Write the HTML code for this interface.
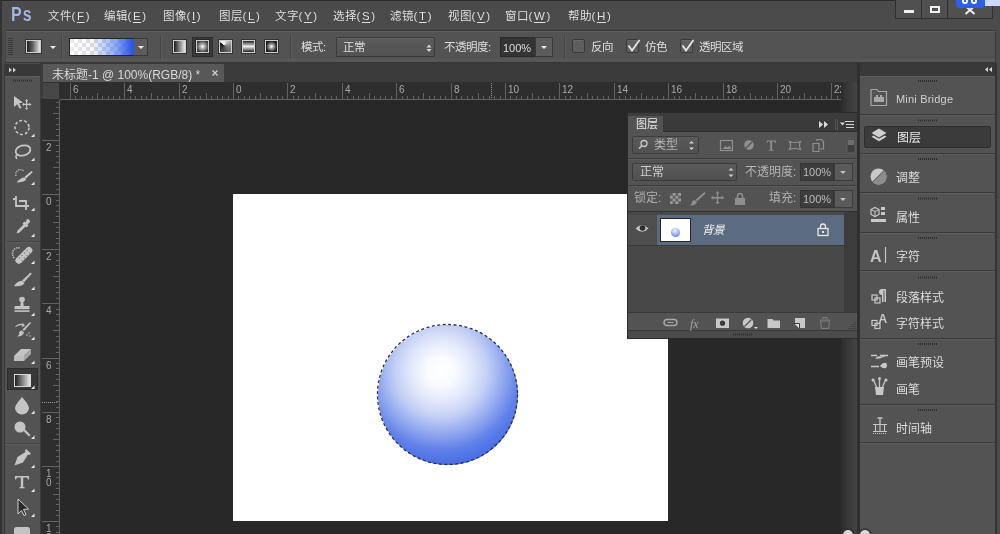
<!DOCTYPE html>
<html lang="zh-CN">
<head>
<meta charset="utf-8">
<style>
*{margin:0;padding:0;box-sizing:border-box}
html,body{width:1000px;height:534px;overflow:hidden;background:#4a4a4a}
body{position:relative;will-change:transform;font-family:"Liberation Sans",sans-serif;color:#d8d8d8;font-size:12px}
.a{position:absolute}
.t{position:absolute;white-space:nowrap;line-height:1}
svg{position:absolute;overflow:visible}
#topline{left:0;top:0;width:1000px;height:1px;background:#2b2b2b}
#leftline{left:0;top:0;width:2px;height:534px;background:#333}
#menu{left:0;top:1px;width:1000px;height:30px;background:#4b4b4b}
.mi{position:absolute;top:10px;font-size:11.5px;line-height:12px;color:#dedede;letter-spacing:0.7px}
.mi u{text-decoration:underline;text-underline-offset:2px;text-decoration-thickness:1px;padding:0 1px}
#logo{left:11px;top:4px;font-size:20px;font-weight:bold;color:#a4b6da;transform:scaleX(0.8);transform-origin:0 0;letter-spacing:1.5px;text-shadow:0 0 1px #2a4070}
.wb{position:absolute;top:0;height:19px;background:#505050;border:1px solid #2f2f2f;border-top:none}
#opts{left:5px;top:31px;width:991px;height:32px;background:#535353;border-top:1px solid #5e5e5e;border-right:1px solid #3a3a3a;border-left:1px solid #444;border-bottom:1px solid #363636;box-shadow:0 -1px 0 #3c3c3c,inset 0 -4px 0 #575757,inset 0 -5px 0 #4f4f4f}
.sep{position:absolute;top:35px;width:2px;height:24px;border-left:1px solid #444;border-right:1px solid #5c5c5c}
.gi{position:absolute;top:40px;width:13px;height:13px;border:1px solid #cfcfcf;box-shadow:0 0 0 1px rgba(20,20,20,0.5)}
.lbl{position:absolute;top:41px;font-size:11.5px;line-height:12px;color:#dedede}
.dd{position:absolute;top:37px;height:20px;background:linear-gradient(#5b5b5b,#525252);border:1px solid #3a3a3a;border-radius:2px;box-shadow:inset 0 1px 0 #646464}
.cb{position:absolute;top:39px;width:13px;height:14px;background:#5e5e5e;border:1px solid #3a3a3a;border-radius:2px;box-shadow:inset 0 1px 0 #6a6a6a}
.tri{position:absolute;width:0;height:0;border-left:3px solid transparent;border-right:3px solid transparent;border-top:3px solid #eee}
#tbhead{left:5px;top:64px;width:35px;height:12px;background:#383838}
#tb{left:5px;top:76px;width:35px;height:458px;background:#535353;border-top:1px solid #5c5c5c}
#docarea{left:40px;top:63px;width:817px;height:471px;background:#3b3b3b}
#tab{left:43px;top:64px;width:181px;height:18px;background:#585858}
#hruler{left:43px;top:82px;width:799px;height:17px;background:#2e2e2e}
#vruler{left:41px;top:99px;width:19px;height:435px;background:#2e2e2e}
#rcorner{left:43px;top:83px;width:16px;height:16px;background:#474747}
#canvas{left:60px;top:100px;width:782px;height:434px;background:#282828}
#vstrip{left:841px;top:82px;width:16px;height:452px;background:linear-gradient(90deg,#2c2c2c,#3a3a3a 50%,#454545)}
#doc{left:233px;top:194px;width:435px;height:327px;background:#fff}
#lp{left:627px;top:112px;width:231px;height:226px;background:#535353;border:1px solid #2e2e2e}
#dock{left:857px;top:63px;width:143px;height:471px;background:#4a4a4a}
</style>
</head>
<body>
<div class="a" id="menu"></div>
<div class="a" id="topline"></div>
<div class="a" id="leftline"></div>
<div class="t" id="logo">Ps</div>
<div class="mi" style="left:48px">文件(<u>F</u>)</div>
<div class="mi" style="left:104px">编辑(<u>E</u>)</div>
<div class="mi" style="left:163px">图像(<u>I</u>)</div>
<div class="mi" style="left:219px">图层(<u>L</u>)</div>
<div class="mi" style="left:275px">文字(<u>Y</u>)</div>
<div class="mi" style="left:333px">选择(<u>S</u>)</div>
<div class="mi" style="left:390px">滤镜(<u>T</u>)</div>
<div class="mi" style="left:448px">视图(<u>V</u>)</div>
<div class="mi" style="left:505px">窗口(<u>W</u>)</div>
<div class="mi" style="left:568px">帮助(<u>H</u>)</div>
<div class="wb" style="left:895px;width:27px;border-radius:0 0 0 1px"></div>
<div class="wb" style="left:921px;width:27px"></div>
<div class="wb" style="left:947px;width:46px;border-radius:0 0 1px 0"></div>
<div class="a" style="left:904px;top:10px;width:10px;height:3px;background:#f0f0f0"></div>
<div class="a" style="left:930px;top:6px;width:10px;height:7px;border:2px solid #f0f0f0"></div>
<svg style="left:0;top:0" width="1000" height="30"><path d="M965.5 6 L974.5 14 M974.5 6 L965.5 14" stroke="#eee" stroke-width="2"/></svg>
<div class="a" style="left:956px;top:0;width:29px;height:8px;background:#2c5ee8;border-radius:0 0 4px 4px"></div>
<div class="a" style="left:962px;top:0;width:6px;height:4px;border:2px solid #fff;border-top:none;border-radius:0 0 3px 3px"></div>
<div class="a" style="left:971px;top:0;width:6px;height:4px;border:2px solid #fff;border-top:none;border-radius:0 0 3px 3px"></div>
<div class="a" style="left:985px;top:0;width:15px;height:6px;background:#cdd8f8"></div>
<div class="a" id="opts"></div>
<svg style="left:0;top:0" width="80" height="64"><g stroke="#3a3a3a" stroke-width="1">
<path d="M8 38.5H13M8 40.5H13M8 42.5H13M8 44.5H13M8 46.5H13M8 48.5H13M8 50.5H13M8 52.5H13M8 54.5H13"/></g></svg>
<div class="gi" style="left:26px;top:40px;width:15px;height:13px;background:linear-gradient(90deg,#1e1e1e,#5a5a5a 40%,#e8e8e8)"></div>
<div class="tri" style="left:50px;top:46px"></div>
<div class="sep" style="left:61px"></div>
<div class="a" style="left:69px;top:38px;width:66px;height:18px;border:1px solid #262626;background:linear-gradient(90deg,rgba(255,255,255,0.6),rgba(230,236,255,0.3) 35%,rgba(100,140,245,0.7) 70%,#2d56e6 97%),repeating-conic-gradient(#ffffff 0 25%,#d0d0d0 0 50%) 0 0/8px 8px"></div>
<div class="a" style="left:134px;top:38px;width:14px;height:18px;background:#5c5c5c;border:1px solid #3a3a3a;border-left:none"></div>
<div class="tri" style="left:138px;top:46px"></div>
<div class="sep" style="left:160px"></div>
<div class="a" style="left:192px;top:37px;width:21px;height:20px;background:#3a3a3a;border:1px solid #2c2c2c"></div>
<div class="gi" style="left:173px;background:linear-gradient(90deg,#1c1c1c,#eaeaea)"></div>
<div class="gi" style="left:196px;background:radial-gradient(circle,#ffffff 0,#bbbbbb 25%,#3a3a3a 80%)"></div>
<div class="gi" style="left:219px;background:conic-gradient(from 0deg at 40% 40%,#f0f0f0 0deg,#888 90deg,#444 200deg,#111 300deg,#f0f0f0 315deg)"></div>
<div class="gi" style="left:242px;background:linear-gradient(#222,#eee 50%,#222)"></div>
<div class="gi" style="left:265px;background:radial-gradient(circle,#ffffff 0,#aaaaaa 25%,#1e1e1e 70%)"></div>
<div class="sep" style="left:290px"></div>
<div class="lbl" style="left:301px">模式:</div>
<div class="dd" style="left:336px;width:99px;border-radius:1px"></div>
<div class="lbl" style="left:343px">正常</div>
<svg style="left:0;top:0" width="600" height="64"><path d="M426.5 47.5l2.5-3 2.5 3zM426.5 49l2.5 3 2.5-3z" fill="#d8d8d8"/></svg>
<div class="lbl" style="left:444px">不透明度:</div>
<div class="a" style="left:500px;top:37px;width:36px;height:20px;background:#343434;border:1px solid #2a2a2a"></div>
<div class="lbl" style="left:503px;font-size:11px;top:42px">100%</div>
<div class="a" style="left:535px;top:37px;width:18px;height:20px;background:#5c5c5c;border:1px solid #3a3a3a"></div>
<div class="tri" style="left:541px;top:46px"></div>
<div class="sep" style="left:564px"></div>
<div class="cb" style="left:572px"></div>
<div class="lbl" style="left:591px">反向</div>
<div class="cb" style="left:626px"></div>
<svg style="left:0;top:0" width="700" height="64"><path d="M628.5 45.5l3.5 5 7.5-10.5" stroke="#e8e8e8" stroke-width="1.8" fill="none"/></svg>
<div class="lbl" style="left:645px">仿色</div>
<div class="cb" style="left:680px"></div>
<svg style="left:0;top:0" width="700" height="64"><path d="M682.5 45.5l3.5 5 7.5-10.5" stroke="#e8e8e8" stroke-width="1.8" fill="none"/></svg>
<div class="lbl" style="left:699px">透明区域</div>
<div class="a" id="tbhead"></div>
<div class="a" id="tb"></div>
<div class="a" style="left:2px;top:63px;width:3px;height:471px;background:#4a4a4a;border-right:1px solid #3a3a3a"></div>
<div class="a" style="left:40px;top:63px;width:1px;height:471px;background:#2e2e2e"></div>
<div class="a" style="left:7px;top:368px;width:31px;height:22px;background:#383838;border:1px solid #2c2c2c"></div>
<svg style="left:0;top:0" width="45" height="534">
<path d="M9 67.5l3 2.5-3 2.5zM13 67.5l3 2.5-3 2.5z" fill="#cfcfcf"/>
<path d="M13 80.5H32" stroke="#2e2e2e" stroke-width="2" stroke-dasharray="1 1"/>
<path d="M6 241.5H39M6 443.5H39" stroke="#444" stroke-width="1"/>
<path d="M6 242.5H39M6 444.5H39" stroke="#5c5c5c" stroke-width="1"/>
<g fill="#c6c6c6" stroke="none">
<!-- move -->
<path d="M14 96l9 6.5-4 0.8 2.5 4.5-1.8 0.9-2.5-4.5-3.2 2.8z"/>
<path d="M26 101h1.2v2.8h2.8v1.2h-2.8v2.8h-1.2v-2.8h-2.8v-1.2h2.8z"/>
<path d="M26.6 99l1.6 2h-3.2zM26.6 110l1.6-2h-3.2zM22 104.4l2-1.6v3.2zM31.5 104.4l-2-1.6v3.2z"/>
</g>
<g fill="none" stroke="#c4c4c4">
<circle cx="22" cy="127.5" r="7" stroke-width="1.6" stroke-dasharray="3 2"/>
<ellipse cx="23" cy="150.5" rx="7.5" ry="5" stroke-width="1.8" transform="rotate(-15 23 150.5)"/>
<path d="M17 154q-2 3 0 5" stroke-width="1.5"/>
<path d="M16 196v10h10M19 201h7v9M13 199h3M26 206h3" stroke-width="1.8"/>
<path d="M20 272l-6 8" stroke-width="0"/>
</g>
<g fill="#c4c4c4">
<!-- quick select -->
<path d="M31.5 171l1.3 1.3-6.8 6.3-1.6-1.5z"/>
<path d="M24.3 177.2l2 1.9q-1.5 3.6-9.5 3.3q2.5-4 7.5-5.2z"/>
<path d="M16 176q-1-4 2.5-6q3-1 5 1" fill="none" stroke="#c0c0c0" stroke-width="1.4" stroke-dasharray="1.2 1"/>
<!-- eyedropper -->
<path d="M27 219q3 0 3 3l-2.5 2.5 1 1-2 2-1-1-6 6-3 1 1-3 6-6-1-1 2-2 1 1z"/>
<!-- healing -->
<path d="M16.5 258l10-10q2.5-2.3 4.8 0t0 4.8l-10 10q-2.4 2.3-4.8 0t0-4.8z"/>
<g fill="#7a7a7a"><circle cx="22" cy="255.5" r="0.7"/><circle cx="24.5" cy="253" r="0.7"/><circle cx="27" cy="250.5" r="0.7"/><circle cx="24.5" cy="258" r="0.7"/><circle cx="27" cy="255.5" r="0.7"/><circle cx="19.5" cy="258" r="0.7"/><circle cx="22" cy="260.5" r="0.7"/><circle cx="29.5" cy="253" r="0.7"/></g>
<path d="M14 258q-3-5 0-8.5q2.5-2.5 6-1.5" fill="none" stroke="#c8c8c8" stroke-width="1.5" stroke-dasharray="1.3 1"/>
<!-- brush -->
<path d="M30.5 272.5l1.3 1.3-7.8 8.4-1.8-1.6z"/>
<path d="M22 280.8l2.4 2.2q-1.5 3.6-10.5 3.2q3-5 8.1-5.4z"/>
<!-- stamp -->
<circle cx="22" cy="299.5" r="2.8"/>
<path d="M21 301h2l0.8 5h-3.6z"/>
<rect x="14.5" y="306" width="15" height="3.2"/>
<rect x="14.5" y="310.3" width="15" height="1.6"/>
<!-- history brush -->
<path d="M30 322l1 1-7 8-1.5-1.5z"/>
<path d="M22 330.5l2 2q-1 4-7 4q3-2 2-4q1-2 3-2z"/>
<path d="M15 327q3-4 8-3l-1-2 3 3.5-3.5 2 1-2q-4-1-6.5 1.5z"/>
<circle cx="27" cy="335" r="0.8"/><circle cx="29" cy="333" r="0.8"/><circle cx="30" cy="336" r="0.8"/>
<!-- eraser -->
<path d="M14 356l7-7h10l-7 7z"/>
<path d="M14 356h10v5h-10z" fill="#bdbdbd"/>
<path d="M24 356l7-7v5l-7 7z" fill="#a5a5a5"/>
<!-- blur drop -->
<path d="M22 397q-7 8-7 11a7 6.5 0 0 0 14 0q0-3-7-11z"/>
<!-- dodge -->
<circle cx="20" cy="427" r="5.5"/>
<path d="M23 430.5l1.5-1.5 6 6-1.5 1.5z"/>
<!-- pen -->
<path d="M26 449l5 4.5-1.5 1.5-1.5-0.5-5 8-8.5 3 3-8.5 8-5-0.5-1.5z"/>
<!-- type -->
<path d="M15 476h14v3.5h-1l-1-2h-3.8v9.5l1.6 0.5v0.8h-5.6v-0.8l1.6-0.5v-9.5h-3.8l-1 2h-1z"/>
<!-- path select -->
<path d="M18 499v15l3.5-3.5 2.5 5 2-1-2.5-5 5-0.5z" fill="#2a2a2a" stroke="#d0d0d0" stroke-width="1"/>
<!-- shape -->
<rect x="14" y="527" width="16" height="12" rx="2.5"/>
</g>
<g fill="#ececec">
<path d="M34.5 137l-3.5 0 3.5-3.5z M34.5 161l-3.5 0 3.5-3.5z M34.5 185l-3.5 0 3.5-3.5z M34.5 211l-3.5 0 3.5-3.5z M34.5 237l-3.5 0 3.5-3.5z M34.5 264l-3.5 0 3.5-3.5z M34.5 290l-3.5 0 3.5-3.5z M34.5 316l-3.5 0 3.5-3.5z M34.5 340l-3.5 0 3.5-3.5z M34.5 364l-3.5 0 3.5-3.5z M34.5 389l-3.5 0 3.5-3.5z M34.5 414l-3.5 0 3.5-3.5z M34.5 439l-3.5 0 3.5-3.5z M34.5 468l-3.5 0 3.5-3.5z M34.5 492l-3.5 0 3.5-3.5z M34.5 517l-3.5 0 3.5-3.5z"/>
</g>
</svg>
<div class="a" style="left:14px;top:374px;width:17px;height:13px;border:1px solid #d8d8d8;background:linear-gradient(90deg,#202020,#e8e8e8)"></div>
<div class="a" id="docarea"></div>
<div class="a" id="tab"></div>
<div class="t" style="left:52px;top:69px;font-size:12px;color:#d8d8d8">未标题-1 @ 100%(RGB/8) *</div>
<svg style="left:0;top:0" width="300" height="90"><path d="M212.5 70.5l5 5M217.5 70.5l-5 5" stroke="#d0d0d0" stroke-width="1.3"/></svg>
<div class="a" id="hruler"></div>
<div class="a" id="vruler"></div>
<div class="a" id="canvas"></div>
<div class="a" id="rcorner"></div>
<svg style="left:0;top:0" width="1000" height="534"><path d="M70.5 83V100M75.5 96V100M81.5 96V100M86.5 96V100M92.5 96V100M97.5 93V100M102.5 96V100M108.5 96V100M113.5 96V100M119.5 96V100M124.5 83V100M130.5 96V100M135.5 96V100M141.5 96V100M146.5 96V100M151.5 93V100M157.5 96V100M162.5 96V100M168.5 96V100M173.5 96V100M179.5 83V100M184.5 96V100M189.5 96V100M195.5 96V100M200.5 96V100M206.5 93V100M211.5 96V100M217.5 96V100M222.5 96V100M228.5 96V100M233.5 83V100M238.5 96V100M244.5 96V100M249.5 96V100M255.5 96V100M260.5 93V100M266.5 96V100M271.5 96V100M277.5 96V100M282.5 96V100M287.5 83V100M293.5 96V100M298.5 96V100M304.5 96V100M309.5 96V100M315.5 93V100M320.5 96V100M325.5 96V100M331.5 96V100M336.5 96V100M342.5 83V100M347.5 96V100M353.5 96V100M358.5 96V100M364.5 96V100M369.5 93V100M374.5 96V100M380.5 96V100M385.5 96V100M391.5 96V100M396.5 83V100M402.5 96V100M407.5 96V100M413.5 96V100M418.5 96V100M423.5 93V100M429.5 96V100M434.5 96V100M440.5 96V100M445.5 96V100M451.5 83V100M456.5 96V100M461.5 96V100M467.5 96V100M472.5 96V100M478.5 93V100M483.5 96V100M489.5 96V100M494.5 96V100M500.5 96V100M505.5 83V100M510.5 96V100M516.5 96V100M521.5 96V100M527.5 96V100M532.5 93V100M538.5 96V100M543.5 96V100M549.5 96V100M554.5 96V100M559.5 83V100M565.5 96V100M570.5 96V100M576.5 96V100M581.5 96V100M587.5 93V100M592.5 96V100M597.5 96V100M603.5 96V100M608.5 96V100M614.5 83V100M619.5 96V100M625.5 96V100M630.5 96V100M636.5 96V100M641.5 93V100M646.5 96V100M652.5 96V100M657.5 96V100M663.5 96V100M668.5 83V100M674.5 96V100M679.5 96V100M685.5 96V100M690.5 96V100M695.5 93V100M701.5 96V100M706.5 96V100M712.5 96V100M717.5 96V100M723.5 83V100M728.5 96V100M733.5 96V100M739.5 96V100M744.5 96V100M750.5 93V100M755.5 96V100M761.5 96V100M766.5 96V100M772.5 96V100M777.5 83V100M782.5 96V100M788.5 96V100M793.5 96V100M799.5 96V100M804.5 93V100M810.5 96V100M815.5 96V100M821.5 96V100M826.5 96V100M831.5 83V100M837.5 96V100M60 99.5H842" stroke="#626262" stroke-width="1" fill="none"/><g fill="#a8a8a8" font-size="10" font-family="Liberation Sans"><text x="73" y="93.3">6</text><text x="127" y="93.3">4</text><text x="182" y="93.3">2</text><text x="236" y="93.3">0</text><text x="290" y="93.3">2</text><text x="345" y="93.3">4</text><text x="399" y="93.3">6</text><text x="454" y="93.3">8</text><text x="508" y="93.3">10</text><text x="562" y="93.3">12</text><text x="617" y="93.3">14</text><text x="671" y="93.3">16</text><text x="726" y="93.3">18</text><text x="780" y="93.3">20</text><text x="834" y="93.3">22</text></g><path d="M56 102.5H60M56 107.5H60M53 113.5H60M56 118.5H60M56 124.5H60M56 129.5H60M56 135.5H60M42 140.5H60M56 145.5H60M56 151.5H60M56 156.5H60M56 162.5H60M53 167.5H60M56 173.5H60M56 178.5H60M56 184.5H60M56 189.5H60M42 194.5H60M56 200.5H60M56 205.5H60M56 211.5H60M56 216.5H60M53 222.5H60M56 227.5H60M56 232.5H60M56 238.5H60M56 243.5H60M42 249.5H60M56 254.5H60M56 260.5H60M56 265.5H60M56 271.5H60M53 276.5H60M56 281.5H60M56 287.5H60M56 292.5H60M56 298.5H60M42 303.5H60M56 309.5H60M56 314.5H60M56 320.5H60M56 325.5H60M53 330.5H60M56 336.5H60M56 341.5H60M56 347.5H60M56 352.5H60M42 358.5H60M56 363.5H60M56 368.5H60M56 374.5H60M56 379.5H60M53 385.5H60M56 390.5H60M56 396.5H60M56 401.5H60M56 407.5H60M42 412.5H60M56 417.5H60M56 423.5H60M56 428.5H60M56 434.5H60M53 439.5H60M56 445.5H60M56 450.5H60M56 456.5H60M56 461.5H60M42 466.5H60M56 472.5H60M56 477.5H60M56 483.5H60M56 488.5H60M53 494.5H60M56 499.5H60M56 504.5H60M56 510.5H60M56 515.5H60M42 521.5H60M56 526.5H60M56 532.5H60M59.5 100V534" stroke="#626262" stroke-width="1" fill="none"/><g fill="#a8a8a8" font-size="10" font-family="Liberation Sans"><text x="46" y="151">2</text><text x="46" y="205">0</text><text x="46" y="260">2</text><text x="46" y="314">4</text><text x="46" y="369">6</text><text x="46" y="423">8</text><text x="46" y="477">1</text><text x="46" y="486">0</text><text x="46" y="532">1</text><text x="46" y="541">2</text></g></svg>

<div class="a" id="vstrip"></div>
<svg style="left:0;top:0" width="1000" height="534"><path d="M491.5 83V98M42 402.5H58" stroke="#9a9a9a" stroke-width="1" stroke-dasharray="1 1"/></svg>
<div class="a" id="doc"></div>
<div class="a" style="left:377.5px;top:324.5px;width:140px;height:140px;border-radius:50%;background:radial-gradient(circle at 45% 33%,#ffffff 0,#fafbff 14px,#e3e9fb 30px,#c3cff5 46px,#94aaef 62px,#6282e9 78px,#4a6fe6 92px,#3a62e4 105px)"></div>
<svg style="left:0;top:0" width="1000" height="534"><circle cx="447.5" cy="394.5" r="70" fill="none" stroke="#2a3045" stroke-width="1.3" stroke-dasharray="3 2.5"/></svg>
<div class="a" style="left:627px;top:112px;width:232px;height:227px;background:#3c3c3c;border:1px solid #2b2b2b"></div>
<div class="a" style="left:628px;top:116px;width:35px;height:17px;background:#535353"></div>
<div class="a" style="left:663px;top:116px;width:194px;height:16px;background:#3a3a3a;border-bottom:1px solid #2e2e2e"></div>
<div class="t" style="left:636px;top:119px;font-size:11px;color:#e8e8e8">图层</div>
<svg style="left:0;top:0" width="1000" height="534">
<path d="M819 121l4 3.5-4 3.5zM824 121l4 3.5-4 3.5z" fill="#d8d8d8"/>
<path d="M835.5 119V130M837.5 119V130" stroke="#555" stroke-width="1"/>
<path d="M840 122.5h5l-2.5 3z" fill="#d8d8d8"/>
<path d="M845 121.5h9M846 124.5h8M846 127.5h8" stroke="#d8d8d8" stroke-width="1.2"/>
</svg>
<div class="a" style="left:628px;top:132px;width:229px;height:205px;background:#535353"></div>
<!-- filter row -->
<div class="a" style="left:632px;top:136px;width:67px;height:18px;background:linear-gradient(#5a5a5a,#505050);border:1px solid #3c3c3c;border-radius:2px"></div>
<svg style="left:0;top:0" width="1000" height="534">
<circle cx="644" cy="143.5" r="3" fill="none" stroke="#c8c8c8" stroke-width="1.3"/><path d="M641.8 145.8l-2.8 2.8" stroke="#c8c8c8" stroke-width="1.5"/>
<path d="M689 143.5l2.5-2.5 2.5 2.5zM689 147.5l2.5 2.5 2.5-2.5z" fill="#d0d0d0"/>
</svg>
<div class="t" style="left:654px;top:139px;font-size:12px;color:#b4b4b4">类型</div>
<svg style="left:0;top:0" width="1000" height="534">
<g fill="none" stroke="#909090" stroke-width="1.2">
<rect x="720.5" y="140.5" width="12" height="10"/>
<circle cx="749" cy="145" r="4.8" fill="#909090" stroke="none"/>
<path d="M789.5 141.5q6 2 11 0q-2 3.5 0 8q-6-2-11 0q2-4.5 0-8z"/>
<path d="M813 143.5h6v8h-6zM817 141v-1.5h4.5l2 2v7.5h-3" />
</g>
<path d="M722.5 149l3-3 2 1.5 2-2 2 3.5z" fill="#909090"/>
<path d="M745.5 148.5l7-7" stroke="#535353" stroke-width="1.2"/>
<path d="M767 140.5h9v2.5h-0.8l-0.6-1.4h-2.5v8l1.3 0.4v0.7h-4.4v-0.7l1.3-0.4v-8h-2.5l-0.6 1.4h-0.7z" fill="#909090"/>
<rect x="847" y="139" width="8" height="14" rx="1" fill="#3e3e3e" stroke="#5e5e5e"/>
<rect x="848" y="140" width="6" height="5" fill="#6e6e6e"/>
<path d="M628 158.5H857" stroke="#3b3b3b" stroke-width="1"/><path d="M628 159.5H857" stroke="#5c5c5c" stroke-width="1"/>
<path d="M628 185.5H857" stroke="#3b3b3b" stroke-width="1"/><path d="M628 186.5H857" stroke="#5c5c5c" stroke-width="1"/>
</svg>
<!-- blend row -->
<div class="a" style="left:632px;top:163px;width:105px;height:18px;background:linear-gradient(#5a5a5a,#505050);border:1px solid #3c3c3c;border-radius:2px"></div>
<div class="t" style="left:640px;top:166px;font-size:12px;color:#d0d0d0">正常</div>
<svg style="left:0;top:0" width="1000" height="534"><path d="M728.5 170.5l2.5-2.5 2.5 2.5zM728.5 174.5l2.5 2.5 2.5-2.5z" fill="#d0d0d0"/></svg>
<div class="t" style="left:745px;top:166px;font-size:12px;color:#b4b4b4">不透明度:</div>
<div class="a" style="left:800px;top:163px;width:34px;height:18px;background:#3d3d3d;border:1px solid #353535"></div>
<div class="t" style="left:803px;top:167px;font-size:11px;color:#bcbcbc">100%</div>
<div class="a" style="left:834px;top:163px;width:19px;height:18px;background:#5a5a5a;border:1px solid #3c3c3c"></div>
<div class="tri" style="left:840px;top:171px;border-top-color:#c0c0c0"></div>
<!-- lock row -->
<div class="t" style="left:634px;top:192px;font-size:12px;color:#acacac">锁定:</div>
<svg style="left:0;top:0" width="1000" height="534">
<rect x="670" y="193" width="11" height="11" fill="#9a9a9a"/>
<path d="M670 193h2.75v2.75h-2.75zM675.5 193h2.75v2.75h-2.75zM672.75 195.75h2.75v2.75h-2.75zM678.25 195.75h2.75v2.75h-2.75zM670 198.5h2.75v2.75h-2.75zM675.5 198.5h2.75v2.75h-2.75zM672.75 201.25h2.75v2.75h-2.75zM678.25 201.25h2.75v2.75h-2.75z" fill="#5e5e5e"/>
<g fill="#8e8e8e">
<path d="M704.5 192l1.2 1.2-8.5 8-1.6-1.4z"/>
<path d="M695 200l2 2q-1 3.5-7.5 3.5q3-1.8 2.3-3.5q1.5-2 3.2-2z"/>
<path d="M717.5 191l2 2.5h-1.3v3.5h3.5v-1.3l2.5 2-2.5 2v-1.3h-3.5v3.5h1.3l-2 2.5-2-2.5h1.3v-3.5h-3.5v1.3l-2.5-2 2.5-2v1.3h3.5v-3.5h-1.3z"/>
<rect x="735" y="198" width="10" height="7"/>
</g>
<path d="M737.5 198v-2a2.5 2.5 0 0 1 5 0v2" fill="none" stroke="#8e8e8e" stroke-width="1.5"/>
</svg>
<div class="t" style="left:769px;top:192px;font-size:12px;color:#b0b0b0">填充:</div>
<div class="a" style="left:800px;top:190px;width:34px;height:18px;background:#3d3d3d;border:1px solid #353535"></div>
<div class="t" style="left:803px;top:194px;font-size:11px;color:#bcbcbc">100%</div>
<div class="a" style="left:834px;top:190px;width:19px;height:18px;background:#5a5a5a;border:1px solid #3c3c3c"></div>
<div class="tri" style="left:840px;top:198px;border-top-color:#c0c0c0"></div>
<!-- layer list -->
<div class="a" style="left:628px;top:211px;width:229px;height:101px;background:#484848;border-top:1px solid #333"></div>
<div class="a" style="left:844px;top:212px;width:13px;height:100px;background:#3c3c3c"></div>
<div class="a" style="left:628px;top:215px;width:216px;height:31px;background:#4e4e4e;border-bottom:1px solid #3a3a3a"></div>
<div class="a" style="left:657px;top:215px;width:187px;height:30px;background:#5b6b80"></div>
<svg style="left:0;top:0" width="1000" height="534">
<path d="M635.5 228.5q6.5-7 13 0q-6.5 6.5-13 0z" fill="#c4c4c4"/>
<circle cx="642.5" cy="228" r="2.8" fill="#2e2e2e"/>
</svg>
<div class="a" style="left:660px;top:218px;width:31px;height:24px;background:#fff;border:1px solid #252525"></div>
<div class="a" style="left:671px;top:228px;width:9px;height:9px;border-radius:50%;background:radial-gradient(circle at 45% 30%,#f4f6ff,#9fb2ee 50%,#3f62dc)"></div>
<div class="t" style="left:702px;top:225px;font-size:11.5px;color:#f0f0f0;font-style:italic">背景</div>
<svg style="left:0;top:0" width="1000" height="534">
<rect x="818" y="228.5" width="10" height="7" fill="none" stroke="#e8e8e8" stroke-width="1.3"/>
<path d="M820.5 228.5v-2a2.5 2.5 0 0 1 5 0v2" fill="none" stroke="#e8e8e8" stroke-width="1.3"/>
<rect x="822" y="231" width="2" height="2" fill="#e8e8e8"/>
</svg>
<!-- bottom toolbar -->
<div class="a" style="left:628px;top:312px;width:229px;height:19px;background:#535353;border-top:1px solid #3a3a3a;border-bottom:1px solid #3a3a3a"></div>
<div class="a" style="left:628px;top:331px;width:229px;height:7px;background:#4b4b4b"></div>
<svg style="left:0;top:0" width="1000" height="534">
<g fill="none" stroke="#a8a8a8" stroke-width="1.5">
<rect x="664" y="319.5" width="13" height="6" rx="3"/>
</g>
<path d="M667 322.5h7" stroke="#535353" stroke-width="1.5"/>
<path d="M667.5 322.5h6" stroke="#a8a8a8" stroke-width="1"/>
<text x="690" y="328" font-family="Liberation Serif" font-style="italic" font-size="12" fill="#a0a0a0">fx</text>
<rect x="716" y="318.5" width="13" height="9.5" fill="#c8c8c8"/>
<circle cx="722.5" cy="323.2" r="2.6" fill="#3a3a3a"/>
<circle cx="748" cy="323" r="5.3" fill="#c8c8c8"/>
<path d="M744.5 326.5l7-7" stroke="#535353" stroke-width="1.3"/>
<path d="M754 327h4l-2 2z" fill="#e0e0e0"/>
<path d="M767.5 319h5l1 1.5h6.5v7.5h-12.5z" fill="#c8c8c8"/>
<path d="M795 318h10v10h-6l-4-4z" fill="#c8c8c8"/>
<path d="M795 324h4v4z" fill="#e0e0e0"/><path d="M794.5 323.5h5v5" fill="none" stroke="#3a3a3a" stroke-width="1"/>
<path d="M820.5 321h9l-1 7.5h-7z" fill="none" stroke="#7a7a7a" stroke-width="1.2"/>
<path d="M819.5 320h11M823 319v-1.5h4v1.5" fill="none" stroke="#7a7a7a" stroke-width="1.2"/>
<path d="M848 328.5h8M850 326.5h6M852 324.5h4M854 322.5h2" stroke="#444" stroke-width="1"/>
<path d="M733 334.5H752" stroke="#2e2e2e" stroke-width="2" stroke-dasharray="1 1"/>
</svg>
<div class="a" style="left:857px;top:63px;width:143px;height:471px;background:#4a4a4a"></div>
<div class="a" style="left:857px;top:63px;width:3px;height:471px;background:#2f2f2f"></div>
<div class="a" style="left:860px;top:63px;width:135px;height:13px;background:#393939"></div>
<div class="a" style="left:860px;top:76px;width:135px;height:458px;background:#535353;border-top:1px solid #5e5e5e"></div>
<div class="a" style="left:995px;top:63px;width:2px;height:471px;background:#333"></div>
<div class="a" style="left:864px;top:126px;width:127px;height:22px;background:#3b3b3b;border:1px solid #2e2e2e;border-radius:2px"></div>
<svg style="left:0;top:0" width="1000" height="534">
<path d="M988 67l-3 2.5 3 2.5zM992 67l-3 2.5 3 2.5z" fill="#d8d8d8"/>
<g stroke="#3a3a3a" stroke-width="1"><path d="M860 114.5H995M860 153.5H995M860 192.5H995M860 232.5H995M860 270.5H995M860 338.5H995M860 404.5H995M860 442.5H995"/></g>
<g stroke="#5c5c5c" stroke-width="1"><path d="M860 115.5H995M860 154.5H995M860 193.5H995M860 233.5H995M860 271.5H995M860 339.5H995M860 405.5H995M860 443.5H995"/></g>
<g stroke="#2c2c2c" stroke-width="2" stroke-dasharray="1 1"><path d="M918 81H938M918 120.5H938M918 159H938M918 198.5H938M918 238H938M918 277.5H938M918 344H938M918 410H938"/></g>
<!-- mini bridge icon -->
<path d="M871 89.5h6l1.5 2h8v14h-15.5z" fill="none" stroke="#a8a8a8" stroke-width="1.2"/>
<path d="M874 102v-5h2v-2h2v2h2v-2h2v2h2v5z" fill="#a8a8a8"/>
<!-- layers icon -->
<path d="M879 128.5l7.5 4.5-7.5 4.5-7.5-4.5z" fill="#d0d0d0"/>
<path d="M873.5 135.5l5.5 3.3 5.5-3.3 2 1.3-7.5 4.5-7.5-4.5z" fill="#d0d0d0"/>
<!-- adjustments -->
<circle cx="878.5" cy="176.5" r="8" fill="#c8c8c8"/>
<path d="M872.5 182.5l12-12" stroke="#535353" stroke-width="1.5"/>
<path d="M872.8 182.2a8 8 0 0 0 11.5-11.5z" fill="#8c8c8c"/>
<!-- properties -->
<path d="M871 209.5l4-2 4 2v5l-4 2-4-2z" fill="none" stroke="#c8c8c8" stroke-width="1.2"/>
<path d="M871 209.5l4 2 4-2M875 211.5v5" fill="none" stroke="#c8c8c8" stroke-width="1"/>
<rect x="881" y="207" width="4" height="3" fill="#c8c8c8"/><rect x="881" y="212" width="4" height="3" fill="#c8c8c8"/>
<rect x="871" y="219" width="15" height="3" fill="#c8c8c8"/>
<!-- character -->
<text x="870" y="262" font-family="Liberation Sans" font-size="16" font-weight="bold" fill="#c4c4c4">A</text>
<path d="M885.5 247v16" stroke="#c4c4c4" stroke-width="1.2"/>
<!-- paragraph styles -->
<rect x="872" y="295" width="5" height="5" fill="none" stroke="#c8c8c8" stroke-width="1.2"/>
<rect x="875" y="298" width="5" height="5" fill="none" stroke="#c8c8c8" stroke-width="1.2"/>
<path d="M882 289h4v13h-1.5v-11.5h-1v11.5h-1.5v-7a3 3 0 0 1 0-6z" fill="#c8c8c8"/>
<!-- character styles -->
<rect x="872" y="320.5" width="5" height="5" fill="none" stroke="#c8c8c8" stroke-width="1.2"/>
<rect x="875" y="323.5" width="5" height="5" fill="none" stroke="#c8c8c8" stroke-width="1.2"/>
<text x="878.5" y="323" font-family="Liberation Sans" font-size="12" font-weight="bold" fill="#c8c8c8">A</text>
<!-- brush presets -->
<path d="M871 355.5h6M880 355.5h8M871 366.5h8" stroke="#c8c8c8" stroke-width="1.5"/>
<path d="M875 358.5q3-3 6-2l7-1.5-7 3q-2 1-6 0.5z" fill="#c8c8c8"/>
<path d="M880 366q3-4 6-3q2 2 0 5q-3 1-6-2z" fill="#c8c8c8"/>
<!-- brush -->
<path d="M875 387h9l-1 8h-7z" fill="#c8c8c8"/>
<path d="M876.5 387l-3-7M879.5 387v-8M882.5 387l3-7" stroke="#c8c8c8" stroke-width="1.3"/>
<circle cx="873" cy="380" r="1.5" fill="#c8c8c8"/><circle cx="879.5" cy="378.5" r="1.5" fill="#c8c8c8"/><circle cx="886" cy="380" r="1.5" fill="#c8c8c8"/>
<!-- timeline -->
<path d="M873 424.5h14M873 431.5h14M875.5 424.5v7M880 424.5v7M884.5 424.5v7" stroke="#c8c8c8" stroke-width="1.1" fill="none"/>
<path d="M880 418v6M877.5 418h5" stroke="#c8c8c8" stroke-width="1.3"/>
<path d="M873 433.5h14" stroke="#c8c8c8" stroke-width="1" stroke-dasharray="1 1"/>
</svg>
<div class="t" style="left:896px;top:94px;font-size:11px;color:#d0d0d0;letter-spacing:0.2px">Mini Bridge</div>
<div class="t" style="left:897px;top:132px;font-size:12px;color:#e8e8e8">图层</div>
<div class="t" style="left:896px;top:172px;font-size:12px;color:#dcdcdc">调整</div>
<div class="t" style="left:896px;top:212px;font-size:12px;color:#dcdcdc">属性</div>
<div class="t" style="left:896px;top:251px;font-size:12px;color:#dcdcdc">字符</div>
<div class="t" style="left:896px;top:292px;font-size:12px;color:#dcdcdc">段落样式</div>
<div class="t" style="left:896px;top:318px;font-size:12px;color:#dcdcdc">字符样式</div>
<div class="t" style="left:896px;top:357px;font-size:12px;color:#dcdcdc">画笔预设</div>
<div class="t" style="left:896px;top:384px;font-size:12px;color:#dcdcdc">画笔</div>
<div class="t" style="left:896px;top:423px;font-size:12px;color:#dcdcdc">时间轴</div>
<div class="a" style="left:841px;top:528px;width:14px;height:14px;border-radius:50%;background:#d8d8d8;border:2px solid #303030"></div>
<div class="a" style="left:858px;top:528px;width:14px;height:14px;border-radius:50%;background:#d8d8d8;border:2px solid #3a3a3a"></div>
</body>
</html>
